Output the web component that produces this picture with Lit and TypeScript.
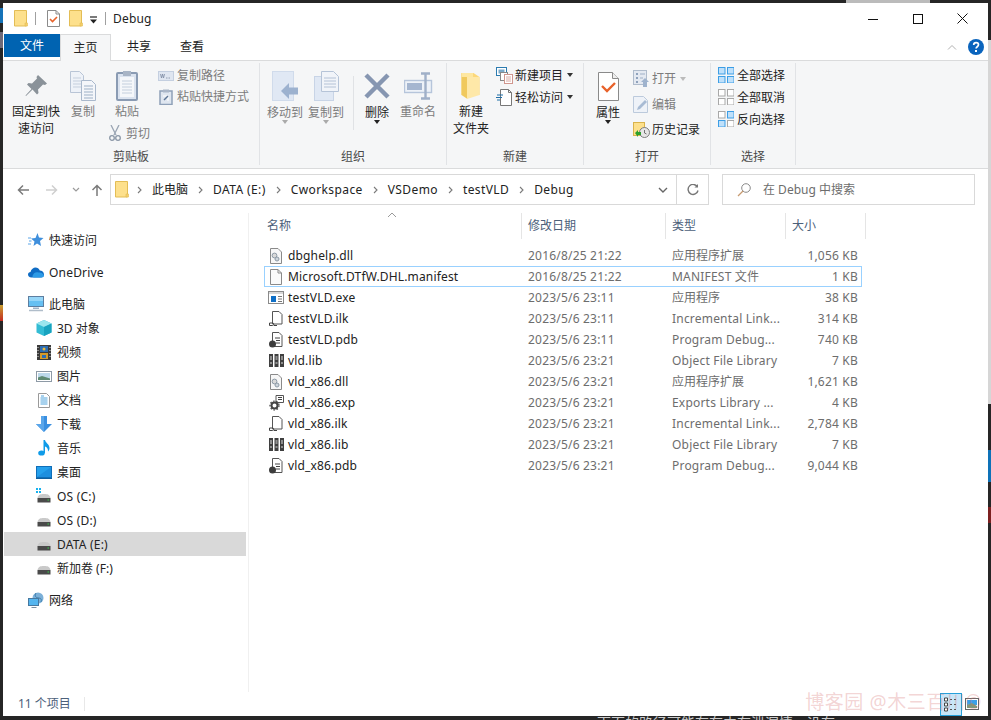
import { LitElement, html, css, svg } from "lit";
import { customElement } from "lit/decorators.js";

const ic = (w: number, h: number, body: unknown) =>
  html`<svg class="ic" width=${w} height=${h} viewBox="0 0 ${w} ${h}" fill="none">${body}</svg>`;

const folderFlat = ic(14, 17, svg`<path d="M.5.5h12v15.5H.5z" fill="#fde08c" stroke="#e3bd55"/><path d="M11 16v-3h2.500v3z" fill="#f5cf6a" stroke="#e3bd55" stroke-width=".6"/>`);
const checkDoc = ic(13, 17, svg`<path d="M.5.5h8.500l3.500 3.500v12.500H.5z" fill="#fff" stroke="#8b8b8b"/><path d="M9 .5V4h3.500" stroke="#8b8b8b"/><path d="M3 9l2.500 2.500L10 7" stroke="#e8622a" stroke-width="1.600"/>`);
const qatArrow = ic(9, 8, svg`<path d="M1 1h7" stroke="#222" stroke-width="1.200"/><path d="M1 3.500h7L4.500 7.500z" fill="#222"/>`);

const pin = ic(24, 24, svg`<path d="M14 1l9 8.500-2 1.500-2-.5-5 5 .5 3.500-1.500 1.500-4.500-5L2 22l-.5-.5 6-6.500-4.500-4.500 1.500-1.500 3.500.5 5-5L12.500 3z" fill="#8a9299"/>`);
const copyBig = ic(26, 30, svg`<path d="M.5.5h9l4 4v17H.5z" fill="#eef2f8" stroke="#b9c5d6"/><path d="M3 7h8M3 10h8M3 13h8M3 16h8" stroke="#c5cfdd"/><path d="M11.500 9.500h10l4 4v16h-14z" fill="#f4f6fa" stroke="#a9b8cc"/><path d="M14 15h9M14 18h9M14 21h9M14 24h9M14 27h9" stroke="#9db0c6"/>`);
const pasteBig = ic(22, 31, svg`<rect x="1" y="3" width="20" height="27" rx="1" fill="#dbe3ef" stroke="#8a9bb3" stroke-width="2"/><rect x="4" y="7" width="14" height="20" fill="#f5f7fa"/><path d="M6 11h10M6 14h10M6 17h10M6 20h10M6 23h10" stroke="#c4cfdd"/><rect x="7" y="1" width="8" height="5" fill="#a9b5c6"/>`);
const scissors = ic(12, 16, svg`<path d="M2 0l5 10M10 0L5 10" stroke="#9aa5b3" stroke-width="1.300"/><circle cx="3" cy="13" r="2.300" stroke="#8a96a6" stroke-width="1.300"/><circle cx="9" cy="13" r="2.300" stroke="#8a96a6" stroke-width="1.300"/>`);
const pathIc = ic(16, 10, svg`<rect x=".5" y=".5" width="15" height="9" fill="#dfe6f1" stroke="#c4cfe0"/><path d="M2.500 3l1 4 1-4 1 4 1-4M8 7h1.500M10.500 7H12" stroke="#7d8ca3" stroke-width=".8"/>`);
const shortcutIc = ic(14, 16, svg`<rect x="1" y="2" width="12" height="13.500" fill="#dfe6f0" stroke="#8ea0b8" stroke-width="1.500"/><rect x="4" y=".5" width="6" height="3" fill="#aab6c8"/><path d="M4 7h5v5" fill="none" stroke="#fff" stroke-width="1"/><path d="M9 7l-4 4" stroke="#5d7595" stroke-width="1.500"/>`);

const moveBig = ic(27, 30, svg`<rect x=".5" y=".5" width="21" height="29" fill="#e0e8f4" stroke="#d0dbeb"/><path d="M9 20l8-8v4.500h9v7h-9V28z" fill="#9db2cf"/>`);
const copyToBig = ic(27, 30, svg`<rect x="1.500" y="5.500" width="19" height="24" fill="#e0e8f4" stroke="#c8d4e6"/><path d="M8.500.5h12l5 5v15h-17z" fill="#f1f4f9" stroke="#b6c4d8"/><path d="M11 7h12M11 10h12M11 13h12M11 16h12" stroke="#b4c2d6"/>`);
const delBig = ic(26, 26, svg`<path d="M2 2l22 22M24 2L2 24" stroke="#8696b1" stroke-width="4.500"/>`);
const renameBig = ic(29, 28, svg`<rect x=".5" y="8.500" width="27" height="12" fill="#eef2f8" stroke="#b6c5db" stroke-width="1.400"/><rect x="3" y="11" width="15" height="7" fill="#a5b6d0"/><path d="M17 1.500h9M17 26.500h9M21.500 1.500v25" stroke="#a0b0c8" stroke-width="2.400"/>`);

const newFolder = ic(20, 29, svg`<path d="M.5 2h12l6 4v18H.5z" fill="#fcd87a"/><path d="M.5 2l6 3.500V28L.5 24z" fill="#f0c95d"/><path d="M6 6h12.500v18L6 28z" fill="#fee8a8"/><path d="M.5 2h11.500v4H.5z" fill="#fee7a0"/>`);
const newItem = ic(17, 17, svg`<rect x=".5" y=".5" width="10" height="8" fill="#fff" stroke="#2b7bb0"/><rect x="2.500" y="2.500" width="6" height="4" fill="#7aa9c9"/><rect x="4.500" y="5.500" width="7" height="8" fill="#fff" stroke="#888"/><rect x="8.500" y="7.500" width="8" height="9" fill="#fff" stroke="#d0968e"/><path d="M10 10h5M10 12h5M10 14h5" stroke="#d0968e" stroke-width=".8"/>`);
const easyAccess = ic(16, 17, svg`<path d="M4.500.5h8l3 3v13h-11z" fill="#fff" stroke="#777"/><path d="M12.500.5v3h3" stroke="#777"/><path d="M1 6h6M0 8.500h6M1 11h3" stroke="#1e6ea8" stroke-width="1.200"/>`);

const propBig = ic(21, 29, svg`<path d="M.5.5h14l6 6v22H.5z" fill="#fff" stroke="#8a8a8a"/><path d="M14.500.5v6h6" fill="#eee" stroke="#8a8a8a"/><path d="M4 14l5 5 8-8" stroke="#e8622a" stroke-width="2.400"/>`);
const openIc = ic(16, 17, svg`<rect x=".5" y=".5" width="13" height="14" fill="#e4e9f1" stroke="#b0bccc"/><path d="M3 3h2v2H3zM3 7h2v2H3zM3 11h2v2H3z" fill="#8fa2bc"/><path d="M7 4h5M7 8h3" stroke="#9fb0c6"/><path d="M8 12l4-4 4 4h-2v5h-4v-5z" fill="#9fb3cd"/>`);
const editIc = ic(16, 17, svg`<path d="M.5.5h10l4 4v12H.5z" fill="#eef2f8" stroke="#bccadc"/><path d="M4 14l1-3 7-7 2 2-7 7z" fill="#a8bbd4"/>`);
const historyIc = ic(17, 16, svg`<rect x=".5" y=".5" width="11" height="13" fill="#fde08c" stroke="#d9b34c"/><circle cx="11.500" cy="10.500" r="5" fill="#e6e6e6" stroke="#7d7d7d"/><path d="M11.500 8v3l2 1" stroke="#555" stroke-width=".8"/><path d="M2 11l3-3v2h3v3H5v2z" fill="#2ca02c"/>`);

const grid = (on: boolean[]) =>
  ic(16, 16, svg`${[[0, 0], [9, 0], [0, 9], [9, 9]].map(([x, y], i) =>
    on[i]
      ? svg`<rect x=${x + 0.5} y=${y + 0.5} width="6.500" height="6.500" fill="#bfe0fa" stroke="#3c9ee6"/>`
      : svg`<rect x=${x + 0.5} y=${y + 0.5} width="6.500" height="6.500" fill="#fff" stroke="#a8a8a8"/>`)}`);

const chev = ic(5, 8, svg`<path d="M1 1l3 3-3 3" stroke="#7a7a7a" stroke-width="1.100"/>`);

const star = ic(16, 16, svg`<path d="M9.500 1l1.500 4.500 4.500.5-3.500 3 1 5-4-2.500L5.500 14l1-4.500L3 6.500l4.500-.5z" fill="#3f8fdc"/><path d="M0 6h3M1 9h2.500M0 12h3" stroke="#5aa5e8"/>`);
const cloud = ic(16, 11, svg`<path d="M3.500 10.500C1 10.500 0 9 0 7.500 0 6 1.200 5 2.500 5 3.200 2 5.500.5 7.500.5c2 0 3.500 1 4.300 3 2 0 4.200 1.500 4.200 4 0 1.800-1.300 3-3 3z" fill="#0f6cc4"/><path d="M6 10.500c-1.500 0-2-1.500-1-2.500.5-2 3-3.500 5.500-2.500 2.500-.5 5 1 5.500 3 0 1-1 2-2.500 2z" fill="#2c9ae6"/>`);
const pc = ic(16, 16, svg`<rect x=".5" y=".5" width="15" height="10" fill="#67c0f2" stroke="#5d7ea0"/><rect x="1" y="1" width="14" height="4" fill="#96d6f8"/><path d="M5 11.500h6v1.500H5z" fill="#9fb3c8"/><path d="M1 14.500h14" stroke="#b0bdca" stroke-width="1.500"/>`);
const cube = ic(16, 16, svg`<path d="M8 0l7.500 3.500v9L8 16 .5 12.500v-9z" fill="#33bcd4"/><path d="M8 0l7.500 3.500L8 7 .5 3.500z" fill="#9ae6ee"/><path d="M8 7l7.500-3.500v9L8 16z" fill="#18a3bf"/>`);
const film = ic(14, 15, svg`<rect width="14" height="15" fill="#3a3a3a"/><rect x="3" y="1" width="8" height="6" fill="#2c6db3"/><rect x="3" y="8" width="8" height="6" fill="#d49a2b"/><circle cx="7" cy="4" r="1.500" fill="#e9b93f"/><rect x="5" y="10" width="4" height="3" fill="#2c6db3"/><path d="M1 2v1M1 5v1M1 8v1M1 11v1M13 2v1M13 5v1M13 8v1M13 11v1" stroke="#ddd"/>`);
const pic = ic(16, 11, svg`<rect x=".5" y=".5" width="15" height="10" fill="#fff" stroke="#8e9aa6"/><rect x="2" y="2" width="12" height="7" fill="#bcd8ea"/><path d="M2 9V6.500l4-1.500 8 2.500V9z" fill="#5f8a72"/>`);
const docIc = ic(12, 15, svg`<path d="M.5.5h8l3 3v11H.5z" fill="#fff" stroke="#9a9a9a"/><path d="M2.500 5h7M2.500 7h7M2.500 9h7M2.500 11h7M3 3h3" stroke="#3c9ad8" stroke-width=".9"/>`);
const down = ic(16, 16, svg`<path d="M5 0h6v8h5l-8 8-8-8h5z" fill="#3a8fe0"/><path d="M5 0h3v16L0 8h5z" fill="#5aa6ea"/>`);
const note = ic(12, 16, svg`<ellipse cx="3.500" cy="13" rx="3.300" ry="2.600" fill="#0f9be8"/><path d="M5.500 13V0h1.500c.5 3 4.500 4 4.500 8 0 1.500-.5 2.500-1.500 3.500.3-3-1.500-4.500-3-5V13z" fill="#0f9be8"/>`);
const desk = ic(16, 13, svg`<rect x=".5" y=".5" width="15" height="11" fill="#25a0ec" stroke="#0f6eb8"/><path d="M1 11l14-10v10z" fill="#1d8fdf"/><path d="M0 12.500h16" stroke="#0f5f9e" stroke-width="1"/>`);
const drive = (win = false) =>
  ic(16, 16, svg`${win ? svg`<path d="M0 0h2v2H0zM3 0h2v2H3zM0 3h2v2H0zM3 3h2v2H3z" fill="#17b1ee"/>` : ""}<path d="M1.500 10C2.500 6.500 4 6 8 6s5.500.5 6.500 4z" fill="#c9c9c9"/><rect x="1.500" y="10" width="13" height="4.500" fill="#4a4a4a"/><rect x="11.500" y="11.500" width="1.500" height="1" fill="#36d14a"/>`);
const net = ic(16, 16, svg`<circle cx="10" cy="6" r="5.500" fill="#7cb0d8"/><path d="M8 1c-2 3 0 5 3 5 2 0 3 2 2 4" stroke="#3e7fae"/><rect x=".5" y="6.500" width="10" height="7" fill="#54b5ef" stroke="#47789f"/><path d="M3.500 15.500h5" stroke="#7b8fa2"/>`);

const fDll = ic(12, 16, svg`<path d="M.5.5h7.500l3.500 3.500v11.500H.5z" fill="#f7f7f7" stroke="#8a8a8a"/><circle cx="4.500" cy="7.500" r="2.400" fill="#d9d9d9" stroke="#8d9aa6"/><circle cx="7" cy="11" r="2" fill="#cfd6dc" stroke="#8d9aa6"/>`);
const fBlank = ic(12, 16, svg`<path d="M.5.5h7.500l3.500 3.500v11.500H.5z" fill="#fafafa" stroke="#8a8a8a"/><path d="M8 .5V4h3.500" stroke="#8a8a8a"/>`);
const fExe = ic(16, 13, svg`<rect x=".5" y=".5" width="15" height="12" fill="#fff" stroke="#8a8a8a"/><path d="M1 1h14v2H1z" fill="#d8d8d8"/><rect x="3" y="5" width="5" height="6" fill="#0f6fc6"/><path d="M10 5.500h4M10 8h4M10 10.500h4" stroke="#777"/>`);
const fIlk = ic(14, 16, svg`<path d="M3.500.5h6.500l3 3v9.500h-9.500z" fill="#fff" stroke="#555"/><path d="M.5 14.500h3a1 1 0 0 0 0-2.500h-3zM5 14.500H8" stroke="#444"/>`);
const fPdb = ic(14, 16, svg`<path d="M3.500.5h6.500l3 3v11h-9.500z" fill="#fff" stroke="#555"/><path d="M6 6h5M7 8.500h4M7 11h4" stroke="#444"/><circle cx="3.500" cy="12" r="3.500" fill="#3d3d3d"/>`);
const fLib = ic(15, 13, svg`<path d="M0 0h4v13H0zM5.500 0h4v13h-4zM11 0h4v13h-4z" fill="#3f3f3f"/><path d="M1 3h2M1 5h2M1 9h2M6.500 3h2M6.500 5h2M6.500 9h2M12 3h2M12 5h2M12 9h2" stroke="#ddd"/>`);
const fExp = ic(15, 16, svg`<path d="M7 .5h7.500v7H7z" fill="#fff" stroke="#555"/><path d="M9 2.500h4M9 4.500h4" stroke="#444"/><circle cx="5.500" cy="10.500" r="3" stroke="#444" stroke-width="2"/><circle cx="5.500" cy="10.500" r="4.500" stroke="#444" stroke-width="1.200" stroke-dasharray="1.600 1.600"/>`);

const search = ic(14, 14, svg`<circle cx="9" cy="5" r="4.300" stroke="#8a8a8a"/><path d="M6 8l-5 5" stroke="#c79a70" stroke-width="1.300"/>`);
const viewDetail = ic(14, 16, svg`<path d="M.5 2h3v3h-3zM.5 7h3v3h-3zM.5 12h3v3h-3z" fill="#fff" stroke="#444"/><path d="M6 3.500h2M10 3.500h2M6 8.500h2M10 8.500h2M6 13.500h2M10 13.500h2" stroke="#555"/>`);
const viewLarge = ic(14, 12, svg`<rect x=".5" y=".5" width="13" height="11" fill="#fff" stroke="#666"/><rect x="2" y="2" width="10" height="5" fill="#3aa0e8"/><path d="M2 7l5-2 5 3v2H2z" fill="#7c9a7c"/>`);
const caret = ic(10, 6, svg`<path d="M1 5l4-4 4 4" stroke="#9a9a9a"/>`);

type Nav = { name: string; icon: unknown; lvl: number; sel?: boolean };
const NAV_GROUPS: Nav[][] = [
  [{ name: "快速访问", icon: star, lvl: 1 }],
  [{ name: "OneDrive", icon: cloud, lvl: 1 }],
  [
    { name: "此电脑", icon: pc, lvl: 1 },
    { name: "3D 对象", icon: cube, lvl: 2 },
    { name: "视频", icon: film, lvl: 2 },
    { name: "图片", icon: pic, lvl: 2 },
    { name: "文档", icon: docIc, lvl: 2 },
    { name: "下载", icon: down, lvl: 2 },
    { name: "音乐", icon: note, lvl: 2 },
    { name: "桌面", icon: desk, lvl: 2 },
    { name: "OS (C:)", icon: drive(true), lvl: 2 },
    { name: "OS (D:)", icon: drive(), lvl: 2 },
    { name: "DATA (E:)", icon: drive(), lvl: 2, sel: true },
    { name: "新加卷 (F:)", icon: drive(), lvl: 2 },
  ],
  [{ name: "网络", icon: net, lvl: 1 }],
];

const FILES: [unknown, string, string, string, string][] = [
  [fDll, "dbghelp.dll", "2016/8/25 21:22", "应用程序扩展", "1,056 KB"],
  [fBlank, "Microsoft.DTfW.DHL.manifest", "2016/8/25 21:22", "MANIFEST 文件", "1 KB"],
  [fExe, "testVLD.exe", "2023/5/6 23:11", "应用程序", "38 KB"],
  [fIlk, "testVLD.ilk", "2023/5/6 23:11", "Incremental Link...", "314 KB"],
  [fPdb, "testVLD.pdb", "2023/5/6 23:11", "Program Debug...", "740 KB"],
  [fLib, "vld.lib", "2023/5/6 23:21", "Object File Library", "7 KB"],
  [fDll, "vld_x86.dll", "2023/5/6 23:21", "应用程序扩展", "1,621 KB"],
  [fExp, "vld_x86.exp", "2023/5/6 23:21", "Exports Library ...", "4 KB"],
  [fIlk, "vld_x86.ilk", "2023/5/6 23:21", "Incremental Link...", "2,784 KB"],
  [fLib, "vld_x86.lib", "2023/5/6 23:21", "Object File Library", "7 KB"],
  [fPdb, "vld_x86.pdb", "2023/5/6 23:21", "Program Debug...", "9,044 KB"],
];

const CRUMBS = ["此电脑", "DATA (E:)", "Cworkspace", "VSDemo", "testVLD", "Debug"];
const isCjk = (s: string) => /^[\u4e00-\u9fff]+$/.test(s);
const hasCjk = (s: string) => /[\u4e00-\u9fff]/.test(s);

@customElement("app-root")
export class AppRoot extends LitElement {
  static styles = css`
    :host {
      display: block;
      position: relative;
      width: 991px;
      height: 720px;
      overflow: hidden;
      font: 12px/17px "Noto Sans", "Noto Sans CJK SC", sans-serif;
      color: #222;
      background-color: #262626;
      background-image:
        linear-gradient(#262626 8px, #1573b8 8px, #1573b8 23px, #262626 23px, #262626 32px, #6e6a78 32px, #6e6a78 48px, #262626 48px, #262626 305px, #c8a030 305px, #c42a20 321px, #262626 321px),
        linear-gradient(#262626 40px, #d6d6d6 40px, #d6d6d6 404px, #262626 404px, #262626 450px, #0e72b8 450px, #0e72b8 482px, #262626 482px, #262626 507px, #7c2020 507px, #7c2020 523px, #262626 523px),
        linear-gradient(#bbb, #bbb);
      background-size: 3px 100%, 3px 100%, 84px 3px;
      background-position: 0 0, 100% 0, 846px 0;
      background-repeat: no-repeat;
    }
    .ic { display: block; flex: none; }
    .lat { letter-spacing: .2px; }
    .win {
      width: 985px;
      height: 713px;
      margin: 0 0 0 3px;
      border-top: 3px solid transparent;
      background: #fff;
      background-clip: padding-box;
      display: flex;
      flex-direction: column;
    }
    .title { height: 31px; display: flex; align-items: center; flex: none; }
    .title .f1 { margin-left: 11px; }
    .vsep { width: 1px; height: 13px; background: #a0a0a0; }
    .title .s1 { margin-left: 7px; }
    .title .c1 { margin-left: 11px; }
    .title .f2 { margin-left: 9px; }
    .title .q { margin-left: 6px; margin-top: 3px; }
    .title .s2 { margin-left: 7px; }
    .title .name { margin-left: 7px; flex: 1; font-size: 12px; letter-spacing: .2px; }
    .wc { display: flex; }
    .wc button { width: 45px; height: 30px; border: 0; background: none; padding: 0; display: flex; align-items: center; justify-content: center; }
    .wcs { margin-right: 3px; display: flex; }

    .tabs { height: 26px; display: flex; flex: none; }
    .tab { text-align: center; line-height: 25px; height: 26px; }
    .tab.file { width: 56px; height: 23px; margin-left: 1px; background: #0063b1; color: #fff; line-height: 24px; }
    .tab.home { width: 51px; height: 27px; background: #f5f6f7; border: 1px solid #dadbdc; border-bottom: 0; box-sizing: border-box; margin-bottom: -1px; position: relative; z-index: 1; }
    .tab.t3 { width: 56px; }
    .tab.t4 { width: 50px; }
    .help { margin-left: auto; display: flex; align-items: center; gap: 11px; padding-right: 4px; height: 26px; }

    .ribbon { height: 109px; flex: none; box-sizing: border-box; background: #f5f6f7; border-top: 1px solid #dadbdc; border-bottom: 1px solid #dadbdc; display: flex; padding-top: 2px; }
    .grp { height: 102px; box-sizing: border-box; border-right: 1px solid #e1e3e6; display: flex; flex-direction: column; flex: none; }
    .g1 { width: 257px; }
    .g2 { width: 187px; }
    .g3 { width: 137px; }
    .g4 { width: 127px; }
    .g5 { width: 85px; }
    .gbody { flex: 1; display: flex; min-height: 0; }
    .glabel { height: 19px; line-height: 22px; text-align: center; color: #4a4a4a; flex: none; }
    .big { display: flex; flex-direction: column; align-items: center; padding-top: 5px; text-align: center; color: #222; }
    .big.off { color: #7c7c7c; }
    .big .iw { height: 35px; display: flex; align-items: center; justify-content: center; }
    .big.arrowed .iw { height: 36px; }
    .big .arrow { width: 0; height: 0; border: 3px solid transparent; border-top: 4px solid #222; margin-top: -1px; }
    .big.off .arrow { border-top-color: #aaa; }
    .small { display: flex; flex-direction: column; padding-top: 1px; }
    .small.clip { padding-top: 2px; }
    .small.clip .row { height: 21px; }
    .row { display: flex; align-items: center; height: 22px; gap: 3px; white-space: nowrap; }
    .row.off { color: #7c7c7c; }
    .row .iw { width: 16px; display: flex; justify-content: center; flex: none; }
    .row .dd { width: 0; height: 0; border: 3px solid transparent; border-top: 4px solid #333; margin: 3px 0 0 1px; }
    .row .dd.g { border-top-color: #bbb; }
    .small.open { padding-top: 3px; }
    .small.open .row { height: 25.500px; }
    .rsep { width: 1px; height: 54px; background: #e0e2e5; margin-top: 13px; flex: none; }
    .cut { margin: 4px 0 0 3px; gap: 5px; height: 18px; }
    .cut .iw { width: 13px; }

    .addr { height: 37px; flex: none; display: flex; align-items: flex-start; padding-top: 5px; box-sizing: border-box; }
    .nav { width: 107px; height: 31px; display: flex; align-items: center; flex: none; }
    .abox { width: 599px; height: 31px; box-sizing: border-box; border: 1px solid #d9d9d9; display: flex; align-items: center; flex: none; }
    .abox .crumbs { flex: 1; display: flex; align-items: center; padding-left: 4px; }
    .abox .crumb { margin: 0 10px 0 10px; white-space: nowrap; }
    .abox .crumb.lat { letter-spacing: .4px; }
    .abox .fold { margin-right: 8px; }
    .abox .drop { width: 26px; display: flex; justify-content: center; }
    .abox .ref { width: 31px; align-self: stretch; border-left: 1px solid #d9d9d9; display: flex; align-items: center; justify-content: center; }
    .sbox { width: 253px; height: 31px; box-sizing: border-box; border: 1px solid #d9d9d9; margin-left: 13px; display: flex; align-items: center; padding-left: 14px; gap: 12px; color: #6d6d6d; flex: none; }

    .body { flex: 1; display: flex; min-height: 0; }
    .side { width: 246px; box-sizing: border-box; flex: none; padding-top: 15px; border-right: 1px solid #f0f0f0; margin-top: 7px; }
    .navg { margin-bottom: 8px; }
    .ni { height: 24px; display: flex; align-items: center; margin: 0 2px 0 1px; }
    .ni.sel { background: #d9d9d9; }
    .ni .iw { width: 16px; display: flex; justify-content: center; flex: none; margin-right: 5px; }
    .ni.l1 { padding-left: 24px; }
    .ni.l2 { padding-left: 32px; }

    .main { flex: 1; min-width: 0; padding: 7px 0 0 12px; position: relative; }
    .hdr { display: grid; grid-template-columns: 261px 144px 120px 80px; height: 26px; margin-bottom: 6px; color: #4c607a; }
    .hdr div { border-right: 1px solid #e5e5e5; padding-left: 6px; line-height: 26px; }
    .sort { position: absolute; left: 138px; top: 6px; }
    .fr { display: grid; grid-template-columns: 264px 144px 118px 68px; width: 598px; height: 21px; align-items: center; box-sizing: border-box; margin-left: 3px; padding-right: 4px; color: #6d6d6d; }
    .fr .n { display: flex; align-items: center; padding-left: 4px; color: #222; white-space: nowrap; letter-spacing: .16px; }
    .fr .n .iw { width: 16px; display: flex; justify-content: center; margin-right: 4px; }
    .fr .s { text-align: right; white-space: nowrap; letter-spacing: .2px; }
    .fr .t { white-space: nowrap; }
    .fr.sel { outline: 1px solid #99d1ff; outline-offset: -1px; }

    .status { height: 24px; flex: none; display: flex; align-items: center; padding-left: 15px; color: #4c607a; position: relative; }
    .status .lbl { margin-top: -2px; }
    .status .sep { width: 1px; height: 14px; background: #e8e8e8; margin-left: 13px; }
    .views { margin-left: auto; display: flex; align-items: center; padding-right: 9px; gap: 3px; height: 24px; }
    .vb { width: 22px; height: 23px; box-sizing: border-box; background: #c8e6f8; border: 1px solid #26a0da; display: flex; align-items: center; justify-content: center; }
    .wm { position: absolute; right: 6px; bottom: 2px; font-size: 19px; line-height: 24px; letter-spacing: .6px; color: rgba(214, 110, 110, .3); white-space: nowrap; pointer-events: none; }
    .under { position: absolute; left: 597px; top: 713px; font-size: 14px; line-height: 20px; color: #ccc; white-space: nowrap; }
  `;

  private big(icon: unknown, lines: string[], off = false, arrow = false, w = 40) {
    return html`<div class="big ${off ? "off" : ""} ${arrow ? "arrowed" : ""}" style="width:${w}px">
      <div class="iw">${icon}</div>
      ${lines.map((l) => html`<div>${l}</div>`)}
      ${arrow ? html`<div class="arrow"></div>` : ""}
    </div>`;
  }

  private row(icon: unknown, text: string, off = false, dd = "") {
    return html`<div class="row ${off ? "off" : ""}"><span class="iw">${icon}</span><span>${text}</span>${dd ? html`<span class="dd ${dd === "g" ? "g" : ""}"></span>` : ""}</div>`;
  }

  render() {
    return html`
      <div class="under">下面的路径可能存在内存泄漏情，没有</div>
      <div class="win">
        <div class="title">
          <span class="f1">${folderFlat}</span><span class="vsep s1"></span>
          <span class="c1">${checkDoc}</span><span class="f2">${folderFlat}</span>
          <span class="q">${qatArrow}</span><span class="vsep s2"></span>
          <span class="name">Debug</span>
          <div class="wcs">
            <div class="wc"><button>${ic(10, 10, svg`<path d="M0 5.500h10" stroke="#111"/>`)}</button>
            <button>${ic(10, 10, svg`<rect x=".5" y=".5" width="9" height="9" stroke="#111"/>`)}</button>
            <button>${ic(11, 11, svg`<path d="M.5.5l10 10M10.500.5l-10 10" stroke="#111"/>`)}</button></div>
          </div>
        </div>
        <div class="tabs">
          <div class="tab file">文件</div>
          <div class="tab home">主页</div>
          <div class="tab t3">共享</div>
          <div class="tab t4">查看</div>
          <div class="help">
            ${ic(10, 6, svg`<path d="M1 5.500l4-4 4 4" stroke="#b0b0b0"/>`)}
            ${ic(16, 16, svg`<circle cx="8" cy="8" r="8" fill="#0a64bd"/><path d="M5.700 6c0-1.500 1-2.400 2.400-2.400s2.400.9 2.400 2.200c0 1.900-2.400 1.900-2.400 3.700" stroke="#fff" stroke-width="1.700"/><rect x="7" y="11" width="2" height="2" fill="#fff"/>`)}
          </div>
        </div>
        <div class="ribbon">
          <div class="grp g1">
            <div class="gbody">
              <div style="margin-left:6px">${this.big(pin, ["固定到快", "速访问"], false, false, 54)}</div>
              ${this.big(copyBig, ["复制"], true, false, 40)}
              <div style="margin-left:2px;width:44px">
                ${this.big(pasteBig, ["粘贴"], true, false, 44)}
                <div class="row off cut"><span class="iw">${scissors}</span><span>剪切</span></div>
              </div>
              <div class="small clip" style="margin-left:9px;">
                ${this.row(pathIc, "复制路径", true)}
                ${this.row(shortcutIc, "粘贴快捷方式", true)}
              </div>
            </div>
            <div class="glabel">剪贴板</div>
          </div>
          <div class="grp g2">
            <div class="gbody">
              <div style="margin-left:5px">${this.big(moveBig, ["移动到"], true, true, 40)}</div>
              ${this.big(copyToBig, ["复制到"], true, true, 42)}
              <div class="rsep" style="margin-left:6px"></div>
              <div style="margin-left:5px">${this.big(delBig, ["删除"], false, true, 36)}</div>
              ${this.big(renameBig, ["重命名"], true, false, 46)}
            </div>
            <div class="glabel">组织</div>
          </div>
          <div class="grp g3">
            <div class="gbody">
              <div style="margin-left:3px">${this.big(newFolder, ["新建", "文件夹"], false, false, 42)}</div>
              <div class="small" style="margin-left:4px">
                ${this.row(newItem, "新建项目", false, "d")}
                ${this.row(easyAccess, "轻松访问", false, "d")}
              </div>
            </div>
            <div class="glabel">新建</div>
          </div>
          <div class="grp g4">
            <div class="gbody">
              <div style="margin-left:4px">${this.big(propBig, ["属性"], false, true, 40)}</div>
              <div class="small open" style="margin-left:5px">
                ${this.row(openIc, "打开", true, "g")}
                ${this.row(editIc, "编辑", true)}
                ${this.row(historyIc, "历史记录")}
              </div>
            </div>
            <div class="glabel">打开</div>
          </div>
          <div class="grp g5">
            <div class="gbody">
              <div class="small" style="margin-left:7px">
                ${this.row(grid([true, true, true, true]), "全部选择")}
                ${this.row(grid([false, false, false, false]), "全部取消")}
                ${this.row(grid([false, true, true, false]), "反向选择")}
              </div>
            </div>
            <div class="glabel">选择</div>
          </div>
        </div>
        <div class="addr">
          <div class="nav">
            <span style="margin-left:14px">${ic(12, 12, svg`<path d="M12 6H1.500M6 1.500L1.500 6 6 10.500" stroke="#7a7a7a" stroke-width="1.500"/>`)}</span>
            <span style="margin-left:17px">${ic(12, 12, svg`<path d="M0 6h10.500M6 1.500L10.500 6 6 10.500" stroke="#cfcfcf" stroke-width="1.500"/>`)}</span>
            <span style="margin-left:14px">${ic(8, 5, svg`<path d="M1 1l3 3 3-3" stroke="#9a9a9a" stroke-width="1.200"/>`)}</span>
            <span style="margin-left:11px">${ic(12, 12, svg`<path d="M6 12V1.500M1.500 6L6 1.500 10.500 6" stroke="#7a7a7a" stroke-width="1.500"/>`)}</span>
          </div>
          <div class="abox">
            <div class="crumbs">
              <span class="fold">${folderFlat}</span>
              ${CRUMBS.map((c) => html`${chev}<span class="crumb ${hasCjk(c) ? "" : "lat"}">${c}</span>`)}
            </div>
            <span class="drop">${ic(10, 6, svg`<path d="M1 1l4 4 4-4" stroke="#666" stroke-width="1.400"/>`)}</span>
            <span class="ref">${ic(12, 12, svg`<path d="M10.500 3A5 5 0 1 0 11 6.500" stroke="#777" stroke-width="1.400"/><path d="M7.500 3.500h3.500V0z" fill="#777"/>`)}</span>
          </div>
          <div class="sbox">${search}<span>在 Debug 中搜索</span></div>
        </div>
        <div class="body">
          <div class="side">
            ${NAV_GROUPS.map(
              (g) => html`<div class="navg">${g.map(
                (n) => html`<div class="ni l${n.lvl} ${n.sel ? "sel" : ""}"><span class="iw">${n.icon}</span><span class=${hasCjk(n.name) ? "" : "lat"}>${n.name}</span></div>`,
              )}</div>`,
            )}
          </div>
          <div class="main">
            <span class="sort">${caret}</span>
            <div class="hdr"><div>名称</div><div>修改日期</div><div>类型</div><div>大小</div></div>
            ${FILES.map(
              (f, i) => html`<div class="fr ${i === 1 ? "sel" : ""}">
                <span class="n"><span class="iw">${f[0]}</span>${f[1]}</span>
                <span class="lat">${f[2]}</span><span class="t ${isCjk(f[3]) ? "" : "lat"}">${f[3]}</span><span class="s">${f[4]}</span>
              </div>`,
            )}
          </div>
        </div>
        <div class="status">
          <span class="lbl">11 个项目</span><span class="sep"></span>
          <div class="views"><span class="vb">${viewDetail}</span>${viewLarge}</div>
          <div class="wm">博客园 @木三百川©</div>
        </div>
      </div>
    `;
  }
}
